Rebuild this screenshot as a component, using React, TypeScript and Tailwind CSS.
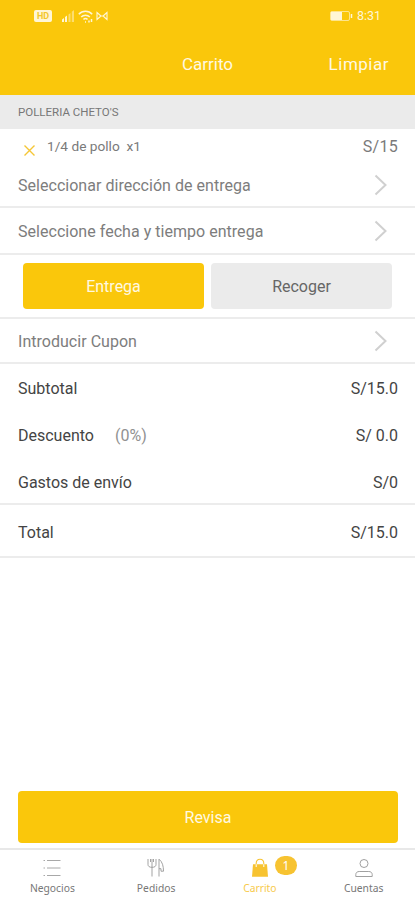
import type { ReactNode } from "react";

const TABS = [
  { label: "Negocios", icon: <ListIcon /> },
  { label: "Pedidos", icon: <CutleryIcon /> },
  { label: "Carrito", icon: <BagIcon />, active: true, badge: 1 },
  { label: "Cuentas", icon: <PersonIcon /> },
];

function ListIcon() {
  return (
    <svg width="18" height="20" viewBox="0 0 18 20" fill="none" stroke="#a8a8a8">
      <path d="M0.5 2.5h1.5M4 2.5h13.5M0.5 10h1.5M4 10h13.5M0.5 17.5h1.5M4 17.5h13.5" />
    </svg>
  );
}

function CutleryIcon() {
  return (
    <svg width="18" height="20" viewBox="0 0 18 20" fill="none" stroke="#999" strokeWidth="0.9">
      <path d="M1 1v5.500c0 2 1.500 2.800 4 2.800s4-.8 4-2.800V1M5 1v17.500M3.500 1v3M6.500 1v3" />
      <path d="M12 18.500V1.200c3.400 2.500 4.500 7 4.500 12h-2.500v-2.500H12" />
    </svg>
  );
}

function BagIcon() {
  return (
    <svg width="18" height="20" viewBox="0 0 18 20" fill="none">
      <path d="M2 6.200h14l1 12.600H1z" fill="#f7c331" />
      <path d="M5.200 9V5.500C5.200 3 6.800 1.200 9 1.200s3.800 1.800 3.800 4.300V9" stroke="#f7c331" strokeWidth="1.100" />
      <path d="M5.200 9V6.200M12.800 9V6.200" stroke="#fff" strokeWidth="1" />
    </svg>
  );
}

function PersonIcon() {
  return (
    <svg width="18" height="20" viewBox="0 0 18 20" fill="none" stroke="#a0a0a0" strokeWidth="1">
      <circle cx="9" cy="5.500" r="4" />
      <path d="M0.8 18.500v-2c0-1.800 1.400-3 3.400-3h9.600c2 0 3.400 1.200 3.400 3v2z" />
    </svg>
  );
}

function StatusBar() {
  return (
    <div className="flex h-8 items-center justify-between pl-[34px] pr-[34px] text-[#fff6d6]">
      <div className="flex items-center">
        <span className="flex h-3 w-[18px] items-center justify-center rounded-[2px] bg-[#fff6d6] text-[9px] font-bold leading-none text-[#f3c62c]">
          HD
        </span>
        <svg className="ml-[9px]" width="14" height="12" viewBox="0 0 14 12" fill="currentColor">
          <path d="M1 9.500l2-1.500v4H1zM4 7l2-1.500V12H4z" />
          <path d="M7.500 4.500l2-1.500v9h-2zM10.800 1.800L13 0v12h-2.200z" opacity=".5" />
        </svg>
        <svg className="ml-[3px]" width="15" height="13" viewBox="0 0 15 13" fill="none" stroke="currentColor" strokeWidth="1.500">
          <path d="M.8 4.300c3.600-4 9.800-4 13.400 0M3.200 7c2.300-2.500 6.300-2.500 8.600 0M5.500 9.500c1-1.200 3-1.200 4 0" />
          <path d="M7 12h1M11 10.500v2M13.500 9v3" />
        </svg>
        <svg className="ml-[3px]" width="12" height="10" viewBox="0 0 12 10" fill="none" stroke="currentColor" strokeWidth="1.100">
          <path d="M1 1.500l4 3.500-4 3.500zM11 1.500L7 5l4 3.500zM5 5h2" />
        </svg>
      </div>
      <div className="flex items-center gap-1">
        <svg width="23" height="10" viewBox="0 0 23 10" fill="none">
          <rect x=".5" y=".5" width="19" height="9" rx="1.500" stroke="#fff6d6" strokeOpacity=".65" />
          <rect x="1" y="1" width="11" height="8" fill="#fff6d6" />
          <path d="M21.500 3v4" stroke="#fff6d6" strokeWidth="1.500" />
        </svg>
        <span className="text-[12.5px] leading-none">8:31</span>
      </div>
    </div>
  );
}

function LinkRow({ className, children }: { className: string; children: ReactNode }) {
  return (
    <button
      className={`flex w-full items-center justify-between border-b-2 border-[#ececec] pl-[18px] pr-7 text-left text-base tracking-[0.03px] text-[#7d7d7d] ${className}`}
    >
      <span className="pt-0.5">{children}</span>
      <svg width="13" height="22" viewBox="0 0 13 22" fill="none" stroke="#d0d0d0" strokeWidth="2">
        <path d="M1.500 1.500L11.500 11l-10 9.500" />
      </svg>
    </button>
  );
}

function PriceRow({ label, note, value, className }: { label: string; note?: string; value: string; className: string }) {
  return (
    <div className={`flex items-center justify-between pl-[18px] pr-[17px] text-base text-[#444] ${className}`}>
      <div>
        {label}
        {note && <span className="ml-[21px] text-[#919191]">{note}</span>}
      </div>
      <span>{value}</span>
    </div>
  );
}

export default function App() {
  return (
    <div className="flex h-[900px] w-full flex-col overflow-hidden bg-white font-['Roboto',sans-serif]">
      <header className="h-[95px] shrink-0 bg-[#fac70b]">
        <StatusBar />
        <div className="grid h-[65px] grid-cols-3 items-center text-[17px] text-[#fff9e2]">
          <h1 className="col-start-2 text-center">Carrito</h1>
          <button className="pr-[26px] text-right tracking-[0.5px]">Limpiar</button>
        </div>
      </header>

      <h2 className="flex h-[34px] shrink-0 items-center bg-[#ebebeb] px-[18px] pt-px text-[11.500px] text-[#777]">
        POLLERIA CHETO'S
      </h2>

      <main className="flex flex-col">
        <div className="flex h-[35px] items-center justify-between pl-6 pr-[17px] text-[#7a7a7a]">
          <div className="flex items-center">
            <svg className="mt-2" width="11" height="11" viewBox="0 0 11 11" stroke="#f5c636" strokeWidth="1.400">
              <path d="M.5.5l10 10M10.500.5l-10 10" />
            </svg>
            <span className="ml-3 whitespace-pre text-[13.700px]">1/4 de pollo  x1</span>
          </div>
          <span className="text-base tracking-[0.300px]">S/15</span>
        </div>
        <LinkRow className="h-11">Seleccionar dirección de entrega</LinkRow>
        <LinkRow className="h-[47px]">Seleccione fecha y tiempo entrega</LinkRow>
        <div className="flex h-16 items-center gap-[7px] border-b-2 border-[#ececec] px-[23px] text-base">
          <button className="h-[46px] flex-1 rounded bg-[#fac70b] pt-0.5 text-[#fff9e2]">Entrega</button>
          <button className="h-[46px] flex-1 rounded bg-[#ebebeb] pt-0.5 text-[#666]">Recoger</button>
        </div>
        <LinkRow className="h-[45px]">Introducir Cupon</LinkRow>

        <div className="border-b-2 border-[#ececec]">
          <PriceRow className="h-12 pt-0.5" label="Subtotal" value="S/15.0" />
          <PriceRow className="h-[46px] pt-0.5" label="Descuento" note="(0%)" value="S/ 0.0" />
          <PriceRow className="h-[45px] pt-1" label="Gastos de envío" value="S/0" />
        </div>
        <PriceRow className="h-[53px] border-b-2 border-[#ececec] pt-1" label="Total" value="S/15.0" />
      </main>

      <button className="mr-[17px] ml-[18px] mt-auto mb-[5px] h-[52px] shrink-0 rounded bg-[#fac70b] pt-0.5 text-base text-[#fff9e2]">
        Revisa
      </button>

      <nav className="grid h-[52px] shrink-0 grid-cols-4 border-t-2 border-[#e8e8e8]">
        {TABS.map(({ label, icon, active, badge }) => (
          <button
            key={label}
            className={`flex flex-col items-center gap-1 pt-2 pl-px font-['Noto_Sans',sans-serif] text-[10.300px] leading-3 ${
              active ? "text-[#f7ca4b]" : "text-[#777]"
            }`}
          >
            <span className="relative">
              {icon}
              {badge && (
                <span className="absolute -top-0.5 left-6 flex h-[19px] w-[22px] items-center justify-center rounded-full bg-[#f7c331] text-xs text-white">
                  {badge}
                </span>
              )}
            </span>
            {label}
          </button>
        ))}
      </nav>
    </div>
  );
}
